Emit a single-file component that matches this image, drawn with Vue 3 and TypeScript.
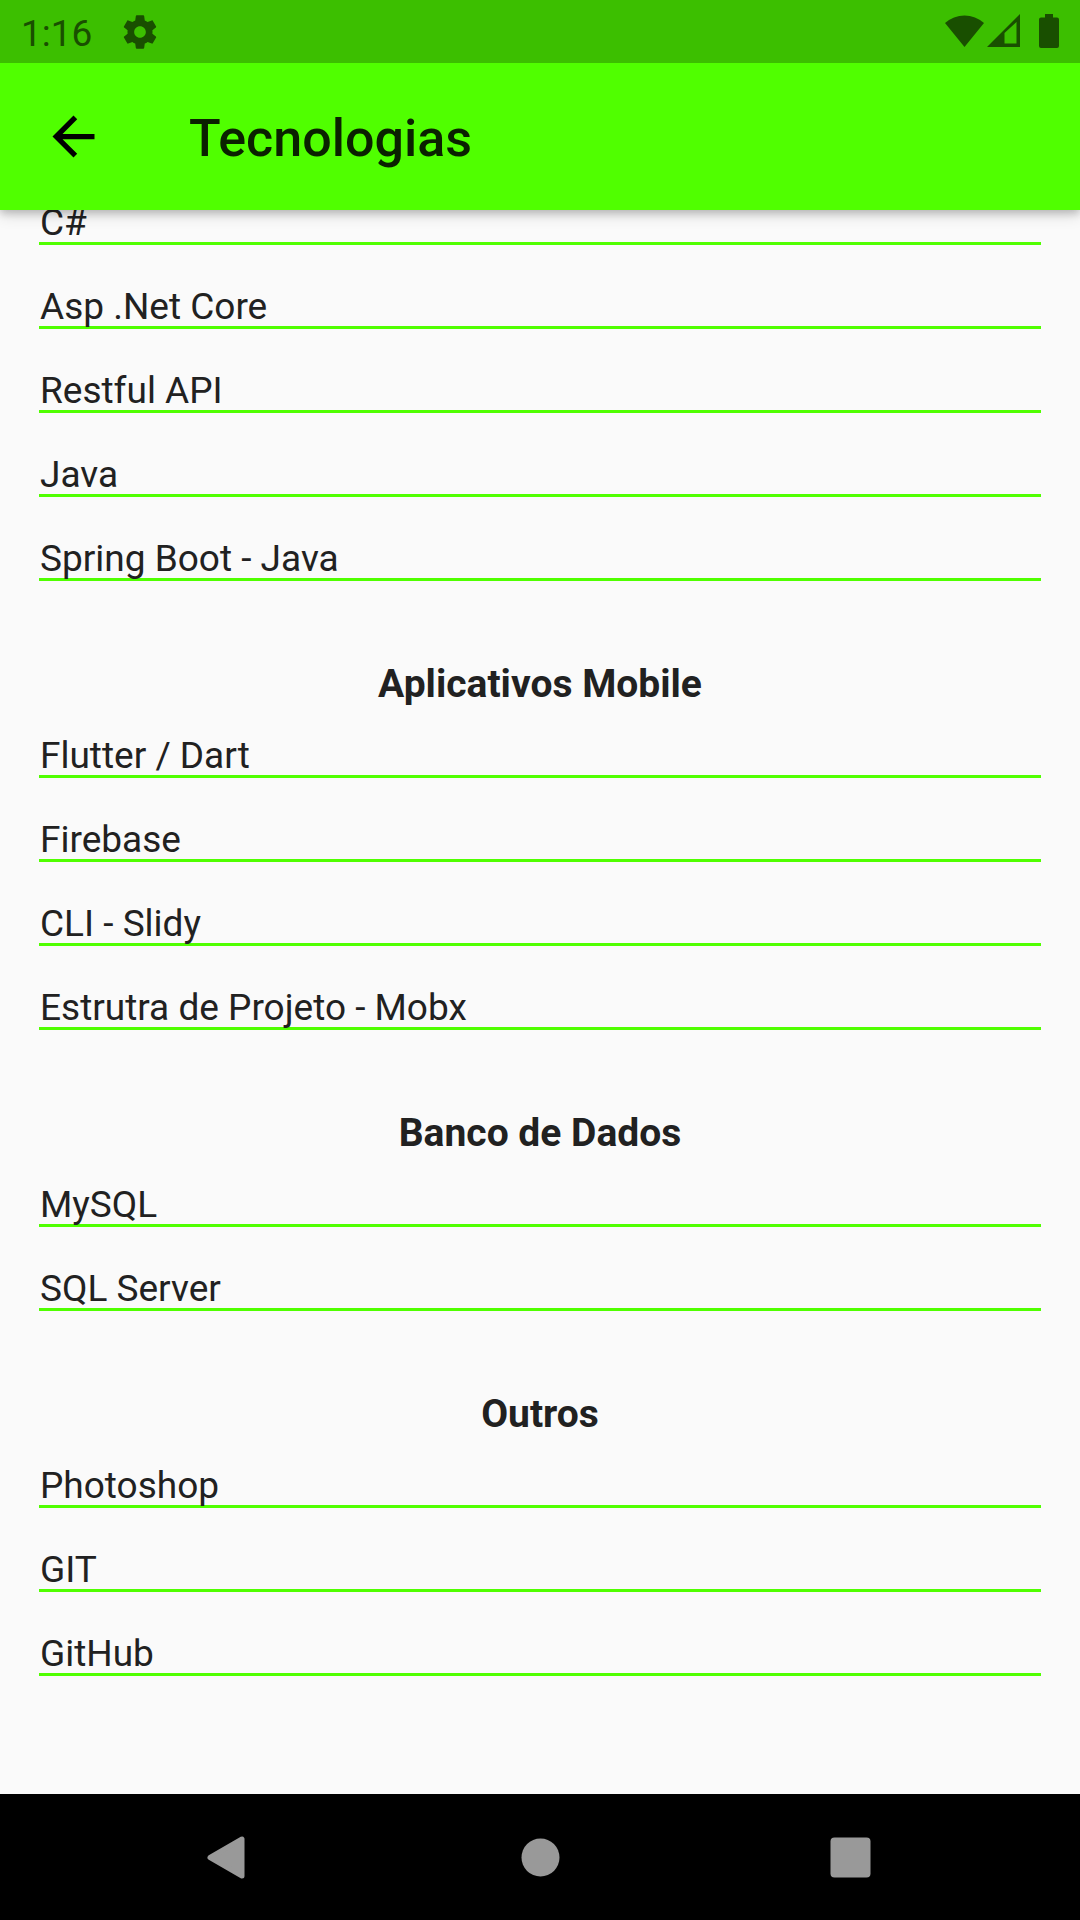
<script setup lang="ts">
interface Section {
  title?: string
  items: string[]
}

const sections: Section[] = [
  { items: ['C#', 'Asp .Net Core', 'Restful API', 'Java', 'Spring Boot - Java'] },
  { title: 'Aplicativos Mobile', items: ['Flutter / Dart', 'Firebase', 'CLI - Slidy', 'Estrutra de Projeto - Mobx'] },
  { title: 'Banco de Dados', items: ['MySQL', 'SQL Server'] },
  { title: 'Outros', items: ['Photoshop', 'GIT', 'GitHub'] },
]
</script>

<template>
  <div class="screen">
    <div class="status-bar">
      <span class="clock">1:16</span>
      <svg class="gear" viewBox="0 0 24 24" width="40" height="40" aria-hidden="true">
        <path d="M19.43 12.98c.04-.32.07-.64.07-.98s-.03-.66-.07-.98l2.11-1.65c.19-.15.24-.42.12-.64l-2-3.46c-.12-.22-.39-.3-.61-.22l-2.49 1c-.52-.4-1.08-.73-1.69-.98l-.38-2.65C14.46 2.18 14.25 2 14 2h-4c-.25 0-.46.18-.49.42l-.38 2.65c-.61.25-1.17.59-1.69.98l-2.49-1c-.23-.09-.49 0-.61.22l-2 3.46c-.13.22-.07.49.12.64l2.11 1.65c-.04.32-.07.65-.07.98s.03.66.07.98l-2.11 1.65c-.19.15-.24.42-.12.64l2 3.46c.12.22.39.3.61.22l2.49-1c.52.4 1.08.73 1.69.98l.38 2.65c.03.24.24.42.49.42h4c.25 0 .46-.18.49-.42l.38-2.65c.61-.25 1.17-.59 1.69-.98l2.49 1c.23.09.49 0 .61-.22l2-3.46c.12-.22.07-.49-.12-.64l-2.11-1.65zM12 15.5c-1.93 0-3.5-1.57-3.5-3.5s1.57-3.5 3.5-3.5 3.5 1.57 3.5 3.5-1.57 3.5-3.5 3.5z" />
      </svg>
      <div class="indicators">
        <svg viewBox="0 0 39 33" width="39" height="33" aria-hidden="true">
          <path d="M19.5 33L0 9A29 29 0 0 1 39 9Z" />
        </svg>
        <svg viewBox="0 0 33 33" width="33" height="33" aria-hidden="true">
          <path fill-rule="evenodd" d="M0 33L33 0V33ZM17.5 29.5H29.5V8L17.5 19Z" />
        </svg>
        <svg class="battery" viewBox="0 0 20 34" width="20" height="34" aria-hidden="true">
          <path d="M6 0H14V3.500H18Q20 3.500 20 5.500V32Q20 34 18 34H2Q0 34 0 32V5.500Q0 3.500 2 3.500H6Z" />
        </svg>
      </div>
    </div>

    <header class="app-bar">
      <button class="back" type="button" aria-label="Voltar">
        <svg viewBox="0 0 24 24" width="63" height="63" aria-hidden="true">
          <path d="M20 11H7.830l5.590-5.590L12 4l-8 8 8 8 1.410-1.410L7.830 13H20v-2z" />
        </svg>
      </button>
      <h1>Tecnologias</h1>
    </header>

    <main class="content">
      <section v-for="(section, i) in sections" :key="i" class="section">
        <h2 v-if="section.title">{{ section.title }}</h2>
        <ul>
          <li v-for="item in section.items" :key="item">{{ item }}</li>
        </ul>
      </section>
    </main>

    <nav class="nav-bar">
      <button type="button" aria-label="Voltar">
        <svg viewBox="0 0 63 63" width="63" height="63" aria-hidden="true">
          <path d="M12 31.500L44 13V50Z" stroke-width="5" stroke-linejoin="round" />
        </svg>
      </button>
      <button type="button" aria-label="Início">
        <svg viewBox="0 0 63 63" width="63" height="63" aria-hidden="true">
          <circle cx="31.500" cy="31.500" r="19" />
        </svg>
      </button>
      <button type="button" aria-label="Recentes">
        <svg viewBox="0 0 63 63" width="63" height="63" aria-hidden="true">
          <rect x="11.500" y="11.500" width="40" height="40" rx="4" />
        </svg>
      </button>
    </nav>
  </div>
</template>

<style>
body {
  margin: 0;
}
</style>

<style scoped>
.screen {
  display: flex;
  flex-direction: column;
  height: 100vh;
  overflow: hidden;
  background: #fafafa;
  color: #212121;
  font-family: Roboto, "Noto Sans", sans-serif;
}

svg {
  display: block;
}

button {
  display: flex;
  align-items: center;
  justify-content: center;
  padding: 0;
  border: 0;
  background: none;
}

.status-bar {
  z-index: 2;
  display: flex;
  flex: none;
  align-items: center;
  height: 63px;
  padding: 0 21px;
  background: #3cbf00;
  color: #194f00;
  fill: #194f00;
}

.clock {
  padding-top: 4px;
  font-size: 37px;
  line-height: 43px;
}

.gear {
  margin-left: 28px;
}

.indicators {
  display: flex;
  gap: 3px;
  align-items: flex-start;
  margin-left: auto;
  padding-bottom: 1px;
}

.battery {
  margin-left: 16px;
}

.app-bar {
  z-index: 1;
  display: flex;
  flex: none;
  align-items: center;
  height: 147px;
  padding: 0 42px;
  background: #50ff00;
  box-shadow: 0 3px 8px rgba(0, 0, 0, 0.2), 0 6px 14px rgba(0, 0, 0, 0.12);
}

.back {
  margin-right: 84px;
}

h1 {
  margin: 0;
  padding-top: 4px;
  color: #0a2100;
  font-size: 52px;
  font-weight: 500;
  line-height: 62px;
}

.content {
  display: flex;
  flex: 1;
  flex-direction: column;
  justify-content: flex-end;
  min-height: 0;
  padding: 0 39px 118px;
}

h2 {
  margin: 80px 0 25px;
  font-size: 39px;
  font-weight: 700;
  line-height: 46px;
  text-align: center;
}

ul {
  display: flex;
  flex-direction: column;
  gap: 38px;
  margin: 0;
  padding: 0;
  list-style: none;
}

li {
  padding: 4px 0 0 1px;
  border-bottom: 3px solid #50ff00;
  font-size: 37px;
  line-height: 39px;
}

.nav-bar {
  z-index: 2;
  display: flex;
  flex: none;
  height: 126px;
  padding: 0 74px;
  background: #000;
}

.nav-bar button {
  flex: 1;
  fill: #999;
  stroke: #999;
  stroke-width: 0;
}
</style>
